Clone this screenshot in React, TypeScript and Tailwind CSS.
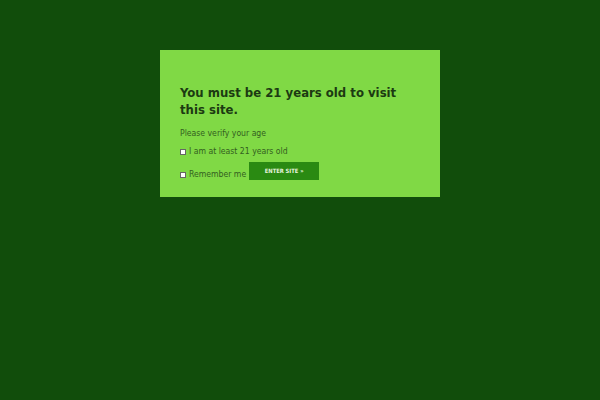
export default function App() {
  return (
    <div
      className="h-[400px] w-[600px] bg-[#114d0b] pt-[50px]"
      style={{ fontFamily: '"DejaVu Sans Condensed", "DejaVu Sans", Verdana, sans-serif' }}
    >
      <div className="ml-[160px] w-[280px] bg-[#80d945] px-[20px] pb-[17px] pt-[34px]">
        <h1 className="text-[13px] font-bold leading-[17px] text-[#1c3a12]">
          You must be 21 years old to visit this site.
        </h1>
        <p className="mt-[9px] text-[8.6px] leading-[12px] text-[#33601f]">Please verify your age</p>
        <label className="mt-[6px] flex items-center text-[8.6px] leading-[12px] text-[#33601f]">
          <span className="mr-[3px] mt-[1px] inline-block h-[6px] w-[6px] border border-[#666] bg-white" />
          I am at least 21 years old
        </label>
        <div className="mt-[5px] flex items-end">
          <label className="flex items-center text-[8.6px] leading-[12px] text-[#33601f]">
            <span className="mr-[3px] mt-[1px] inline-block h-[6px] w-[6px] border border-[#666] bg-white" />
            Remember me
          </label>
          <button className="ml-[3px] flex h-[18px] w-[70px] items-center justify-center bg-[#2a8a12] text-[5.8px] font-bold text-[#e8f5df]">
            ENTER SITE »
          </button>
        </div>
      </div>
    </div>
  );
}
